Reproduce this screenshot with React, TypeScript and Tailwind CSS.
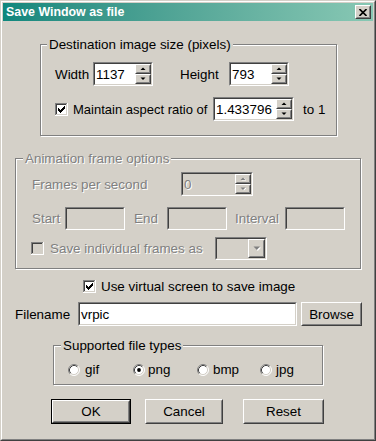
import React from "react";

type P = { className?: string; children?: React.ReactNode };

function Sunken({ className = "", children, disabled = false }: P & { disabled?: boolean }) {
  return (
    <div className={"border border-t-[#808080] border-l-[#808080] border-b-white border-r-white " + className}>
      <div
        className={
          "flex h-full w-full items-stretch border border-t-[#404040] border-l-[#404040] border-b-[#d4d0c8] border-r-[#d4d0c8] " +
          (disabled ? "bg-[#d4d0c8]" : "bg-white")
        }
      >
        {children}
      </div>
    </div>
  );
}

function Raised({ className = "", children }: P) {
  return (
    <div className={"border border-t-white border-l-white border-b-[#404040] border-r-[#404040] " + className}>
      <div className="flex h-full w-full items-center justify-center border border-t-[#d4d0c8] border-l-[#d4d0c8] border-b-[#808080] border-r-[#808080] bg-[#d4d0c8]">
        {children}
      </div>
    </div>
  );
}

function Arrow({ up, disabled }: { up: boolean; disabled?: boolean }) {
  const fill = disabled ? "#808080" : "#000";
  return (
    <svg width="6" height="4" viewBox="0 0 6 4" className="block">
      {disabled && <polygon points={up ? "1.5,3.5 4,1 6.5,3.5" : "1.5,1 6.5,1 4,3.5"} fill="#fff" />}
      <polygon points={up ? "0.5,3 3,0.5 5.5,3" : "0.5,0.5 5.5,0.5 3,3"} fill={fill} />
    </svg>
  );
}

function SpinInput({ className = "", value, disabled = false }: { className?: string; value: string; disabled?: boolean }) {
  return (
    <Sunken className={className} disabled={disabled}>
      <div className={"flex flex-1 items-center pl-[1px] " + (disabled ? "text-[#808080] [text-shadow:1px_1px_0_#fff]" : "text-black")}>
        {value}
      </div>
      <div className="flex w-[16px] flex-col">
        <Raised className="flex-1">
          <Arrow up disabled={disabled} />
        </Raised>
        <Raised className="flex-1">
          <Arrow up={false} disabled={disabled} />
        </Raised>
      </div>
    </Sunken>
  );
}

function Check({ checked, disabled = false }: { checked: boolean; disabled?: boolean }) {
  const rows: [number, number, number][] = [
    [0, 6, 1],
    [1, 5, 2],
    [2, 0, 1],
    [2, 4, 3],
    [3, 0, 2],
    [3, 3, 3],
    [4, 0, 5],
    [5, 1, 3],
    [6, 2, 1],
  ];
  return (
    <svg width="13" height="13" viewBox="0 0 13 13" className="block shrink-0">
      <rect x="0" y="0" width="13" height="13" fill="#fff" />
      <rect x="0" y="0" width="12" height="12" fill="#808080" />
      <rect x="1" y="1" width="11" height="11" fill="#d4d0c8" />
      <rect x="1" y="1" width="10" height="10" fill="#404040" />
      <rect x="2" y="2" width="9" height="9" fill={disabled ? "#d4d0c8" : "#fff"} />
      {checked &&
        rows.map(([r, c, w], i) => <rect key={i} x={3 + c} y={3 + r} width={w} height="1" fill="#000" />)}
    </svg>
  );
}

function Radio({ checked }: { checked: boolean }) {
  return (
    <svg width="12" height="12" viewBox="0 0 12 12" className="block shrink-0">
      <circle cx="6" cy="6" r="5" fill="#fff" />
      <path d="M 2.11 9.89 A 5.5 5.5 0 0 1 9.89 2.11" stroke="#808080" strokeWidth="1" fill="none" />
      <path d="M 9.89 2.11 A 5.5 5.5 0 0 1 2.11 9.89" stroke="#ffffff" strokeWidth="1" fill="none" />
      <path d="M 2.82 9.18 A 4.5 4.5 0 0 1 9.18 2.82" stroke="#404040" strokeWidth="1" fill="none" />
      <path d="M 9.18 2.82 A 4.5 4.5 0 0 1 2.82 9.18" stroke="#d4d0c8" strokeWidth="1" fill="none" />
      {checked && <circle cx="6" cy="6" r="1.9" fill="#000" />}
    </svg>
  );
}

function Group({
  className = "",
  legend,
  legendLeft = "left-[6px]",
  disabled = false,
  children,
}: P & { legend: string; legendLeft?: string; disabled?: boolean }) {
  return (
    <div className={"relative border border-[#808080] shadow-[inset_1px_1px_0_#fff,1px_1px_0_#fff] " + className}>
      <div
        className={
          "absolute -top-[8px] bg-[#d4d0c8] px-[2px] leading-[15px] " +
          legendLeft +
          (disabled ? " text-[#808080] [text-shadow:1px_1px_0_#fff]" : " text-black")
        }
      >
        {legend}
      </div>
      {children}
    </div>
  );
}

const dis = "text-[#808080] [text-shadow:1px_1px_0_#fff]";

export default function App() {
  return (
    <div
      className="h-[441px] w-[376px] overflow-hidden bg-[#d4d0c8] text-[13.4px] leading-[15px] text-black"
      style={{ fontFamily: '"Liberation Sans", Arial, sans-serif' }}
    >
      <div className="h-full w-full border border-t-[#d4d0c8] border-l-[#d4d0c8] border-b-[#404040] border-r-[#404040]">
        <div className="h-full w-full border border-t-white border-l-white border-b-[#808080] border-r-[#808080] p-[1px]">
          {/* Title bar */}
          <div className="flex h-[18px] items-center justify-between bg-gradient-to-r from-[#0d877d] to-[#88c8b4] pl-[3px] pr-[2px]">
            <span className="text-[12.4px] font-bold text-white">Save Window as file</span>
            <Raised className="h-[14px] w-[16px]">
              <svg width="8" height="7" viewBox="0 0 8 7" className="block">
                <path d="M0.5 0 L7.5 7 M7.5 0 L0.5 7" stroke="#000" strokeWidth="1.6" />
              </svg>
            </Raised>
          </div>

          {/* Content */}
          <div className="flex flex-col">
            {/* Group 1 */}
            <Group legend="Destination image size (pixels)" className="ml-[37px] mt-[23px] h-[92px] w-[297px]">
              <div className="pl-[14px] pt-[17px]">
                <div className="flex h-[24px] items-center">
                  <span className="w-[38px]">Width</span>
                  <SpinInput className="h-[24px] w-[60px]" value="1137" />
                  <span className="ml-[27px] w-[49px]">Height</span>
                  <SpinInput className="h-[24px] w-[60px]" value="793" />
                </div>
                <div className="mt-[11px] flex h-[24px] items-center">
                  <Check checked />
                  <span className="ml-[5px] w-[140px] whitespace-nowrap text-[13px]">Maintain aspect ratio of</span>
                  <SpinInput className="h-[24px] w-[81px]" value="1.433796" />
                  <span className="ml-[9px]">to 1</span>
                </div>
              </div>
            </Group>

            {/* Group 2 */}
            <Group
              legend="Animation frame options"
              legendLeft="left-[7px]"
              disabled
              className="ml-[12px] mt-[22px] h-[111px] w-[346px]"
            >
              <div className={"pl-[16px] pt-[13px] " + dis}>
                <div className="flex h-[24px] items-center">
                  <span className="w-[149px]">Frames per second</span>
                  <SpinInput className="h-[24px] w-[72px]" value="0" disabled />
                </div>
                <div className="mt-[11px] flex h-[23px] items-center">
                  <span className="w-[33px]">Start</span>
                  <Sunken className="h-[23px] w-[60px]" disabled />
                  <span className="ml-[9px] w-[33px]">End</span>
                  <Sunken className="h-[23px] w-[60px]" disabled />
                  <span className="ml-[8px] w-[50px]">Interval</span>
                  <Sunken className="h-[23px] w-[60px]" disabled />
                </div>
                <div className="mt-[7px] flex h-[23px] items-center">
                  <div className="-ml-[1px]">
                    <Check checked={false} disabled />
                  </div>
                  <span className="ml-[6px] w-[165px] whitespace-nowrap">Save individual frames as</span>
                  <Sunken className="h-[23px] w-[52px]" disabled>
                    <div className="flex-1" />
                    <Raised className="w-[17px]">
                      <svg width="8" height="5" viewBox="0 0 8 5" className="block">
                        <polygon points="1.5,1.5 8,1.5 4.75,5" fill="#fff" />
                        <polygon points="0.5,0.5 7,0.5 3.75,4" fill="#808080" />
                      </svg>
                    </Raised>
                  </Sunken>
                </div>
              </div>
            </Group>

            {/* Virtual screen */}
            <div className="ml-[80px] mt-[11px] flex h-[13px] items-center">
              <Check checked />
              <span className="ml-[5px] whitespace-nowrap">Use virtual screen to save image</span>
            </div>

            {/* Filename */}
            <div className="ml-[12px] mt-[9px] flex h-[24px] items-center">
              <span className="w-[63px]">Filename</span>
              <Sunken className="h-[24px] w-[219px]">
                <div className="flex items-center pl-[1px]">vrpic</div>
              </Sunken>
              <Raised className="ml-[4px] h-[24px] w-[61px]">Browse</Raised>
            </div>

            {/* Group 3 */}
            <Group legend="Supported file types" legendLeft="left-[7px]" className="ml-[50px] mt-[19px] h-[40px] w-[270px]">
              <div className="flex pl-[14px] pt-[16px]">
                <div className="flex w-[65px] items-center gap-[5px]">
                  <Radio checked={false} />
                  <span>gif</span>
                </div>
                <div className="flex w-[64px] items-center gap-[3px]">
                  <Radio checked />
                  <span>png</span>
                </div>
                <div className="flex w-[63px] items-center gap-[4px]">
                  <Radio checked={false} />
                  <span>bmp</span>
                </div>
                <div className="flex items-center gap-[4px]">
                  <Radio checked={false} />
                  <span>jpg</span>
                </div>
              </div>
            </Group>

            {/* Buttons */}
            <div className="ml-[48px] mt-[14px] flex h-[25px] items-start">
              <div className="h-[25px] w-[80px] border border-black">
                <Raised className="h-full w-full">OK</Raised>
              </div>
              <Raised className="ml-[14px] h-[25px] w-[78px]">Cancel</Raised>
              <Raised className="ml-[20px] h-[25px] w-[81px]">Reset</Raised>
            </div>
          </div>
        </div>
      </div>
    </div>
  );
}
